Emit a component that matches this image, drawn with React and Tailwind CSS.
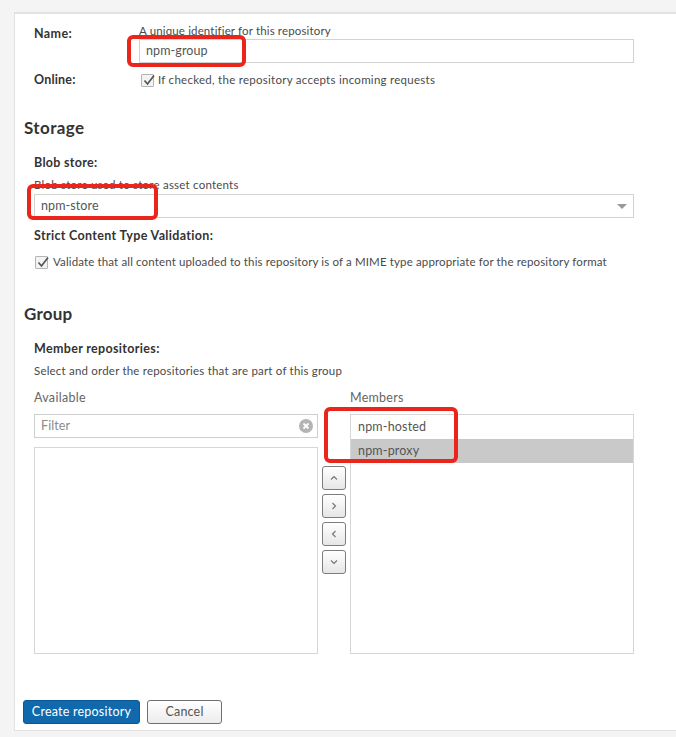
import React from "react";

function Check({ className }) {
  return (
    <span className={"relative block w-[13px] h-[13px] border border-[#b5b5b5] bg-[#f3f3f3] rounded-[1px] shrink-0 " + (className || "")}>
      <svg viewBox="0 0 14 14" className="absolute left-[0px] top-[-2px] w-[14px] h-[14px]" fill="none">
        <path d="M2.5 7.5 L5.5 11 L12 2.5" stroke="#555" strokeWidth="1.7" />
      </svg>
    </span>
  );
}

function Arrow({ d }) {
  return (
    <button className="w-6 h-6 border border-[#7d7d7d] rounded-[3px] bg-gradient-to-b from-white to-[#e6e6e6] flex items-center justify-center">
      <svg viewBox="0 0 10 10" className="w-[10px] h-[10px]" fill="none">
        <path d={d} stroke="#777" strokeWidth="1.2" />
      </svg>
    </button>
  );
}

function Red({ className }) {
  return <div className={"absolute border-[4px] border-[#e9251c] rounded-[6px] " + className} />;
}

export default function App() {
  return (
    <div className="relative w-[676px] h-[737px] overflow-hidden bg-[#f4f4f4] pt-[12px] pl-[14px] text-[#4a4a4a] text-[12px] font-['Lato','Liberation_Sans',sans-serif]">
      <div className="w-[662px] h-[719px] bg-white border-t-2 border-l border-b border-[#e2e2e2] pl-[19px] pr-[42px] flex flex-col">
        <div className="flex mt-[9px]">
          <div className="w-[105px] font-bold text-[12.5px] tracking-[0.4px] text-[#333] leading-[18px] pt-[2px]">Name:</div>
          <div className="flex-1">
            <div className="leading-[15px] pb-[1px] text-[11.5px] tracking-[0.15px]">A unique identifier for this repository</div>
            <div className="h-6 border border-[#d2d2d2] pl-[6px] pt-[1px] flex items-center text-[12.5px] tracking-[0.1px] text-[#555]">npm-group</div>
          </div>
        </div>
        <div className="flex mt-[8px] items-center h-[18px]">
          <div className="w-[107px] font-bold text-[12.5px] tracking-[0.2px] text-[#333]">Online:</div>
          <Check />
          <span className="ml-[4px] text-[11.5px] tracking-[0.27px]">If checked, the repository accepts incoming requests</span>
        </div>

        <h2 className="-ml-[10px] mt-[27px] text-[17px] tracking-[0.4px] leading-[24px] font-bold text-[#333]">Storage</h2>

        <div className="mt-[14px] font-bold text-[12.5px] tracking-[0.3px] text-[#333] leading-[18px]">Blob store:</div>
        <div className="mt-[5px] leading-[16px] text-[11.5px] tracking-[0.22px]">Blob store used to store asset contents</div>
        <div className="mt-[1px] h-6 border border-[#d2d2d2] pl-[6px] pr-[6px] pt-[1px] flex items-center justify-between text-[12.5px] tracking-[0.1px] text-[#555]">
          <span>npm-store</span>
          <span className="w-0 h-0 border-l-[5px] border-r-[5px] border-t-[5px] border-l-transparent border-r-transparent border-t-[#999]" />
        </div>
        <div className="mt-[9px] font-bold text-[12.5px] tracking-[0.33px] text-[#333] leading-[18px]">Strict Content Type Validation:</div>
        <div className="mt-[8px] flex items-center h-[18px] pl-[1px]">
          <Check />
          <span className="ml-[5px] text-[11.5px] tracking-[0.135px]">Validate that all content uploaded to this repository is of a MIME type appropriate for the repository format</span>
        </div>

        <h2 className="-ml-[10px] mt-[31px] text-[17px] tracking-[0.2px] leading-[24px] font-bold text-[#333]">Group</h2>

        <div className="mt-[14px] font-bold text-[12.5px] tracking-[0.33px] text-[#333] leading-[18px]">Member repositories:</div>
        <div className="mt-[5px] leading-[16px] text-[11.5px] tracking-[0.2px]">Select and order the repositories that are part of this group</div>

        <div className="mt-[10px] flex">
          <div className="w-[284px]">
            <div className="h-[18px] leading-[18px] text-[12.5px] tracking-[0.3px] text-[#666]">Available</div>
            <div className="mt-[7px] h-6 border border-[#cfcfcf] pl-[6px] pr-[4px] flex items-center justify-between text-[12.5px] tracking-[0.1px] text-[#8a8a8a]">
              <span className="pt-[1px]">Filter</span>
              <svg viewBox="0 0 14 14" className="w-[14px] h-[14px]">
                <circle cx="7" cy="7" r="7" fill="#b4b4b4" />
                <path d="M4.5 4.5 L9.5 9.5 M9.5 4.5 L4.5 9.5" stroke="#fff" strokeWidth="1.8" />
              </svg>
            </div>
            <div className="mt-[9px] h-[207px] border border-[#d6d6d6]" />
          </div>
          <div className="w-[32px] pl-[4px] pt-[77px] flex flex-col gap-1">
            <Arrow d="M2 6.5 L5 3.5 L8 6.5" />
            <Arrow d="M3.5 2 L6.5 5 L3.5 8" />
            <Arrow d="M6.5 2 L3.5 5 L6.5 8" />
            <Arrow d="M2 3.5 L5 6.5 L8 3.5" />
          </div>
          <div className="w-[284px]">
            <div className="h-[18px] leading-[18px] text-[12.5px] tracking-[0.25px] text-[#666]">Members</div>
            <div className="mt-[7px] h-[240px] border border-[#d6d6d6] text-[12.5px] tracking-[0.18px] text-[#555]">
              <div className="h-6 pl-[7px] flex items-center">npm-hosted</div>
              <div className="h-6 pl-[7px] flex items-center bg-[#c9c9c9]">npm-proxy</div>
            </div>
          </div>
        </div>

        <div className="-ml-[11px] mt-[46px] flex gap-[7px]">
          <button className="w-[117px] h-6 rounded-[3px] bg-[#0f69ac] border border-[#0b5a96] text-white text-[12.5px] tracking-[0.22px]">Create repository</button>
          <button className="w-[75px] h-6 rounded-[3px] border border-[#6f6f6f] bg-gradient-to-b from-white to-[#ececec] text-[#555] text-[12.5px] tracking-[0.2px]">Cancel</button>
        </div>
      </div>

      <Red className="left-[127px] top-[35px] w-[119px] h-[32px]" />
      <Red className="left-[27px] top-[184px] w-[131px] h-[36px]" />
      <Red className="left-[324px] top-[407px] w-[134px] h-[56px]" />
    </div>
  );
}
